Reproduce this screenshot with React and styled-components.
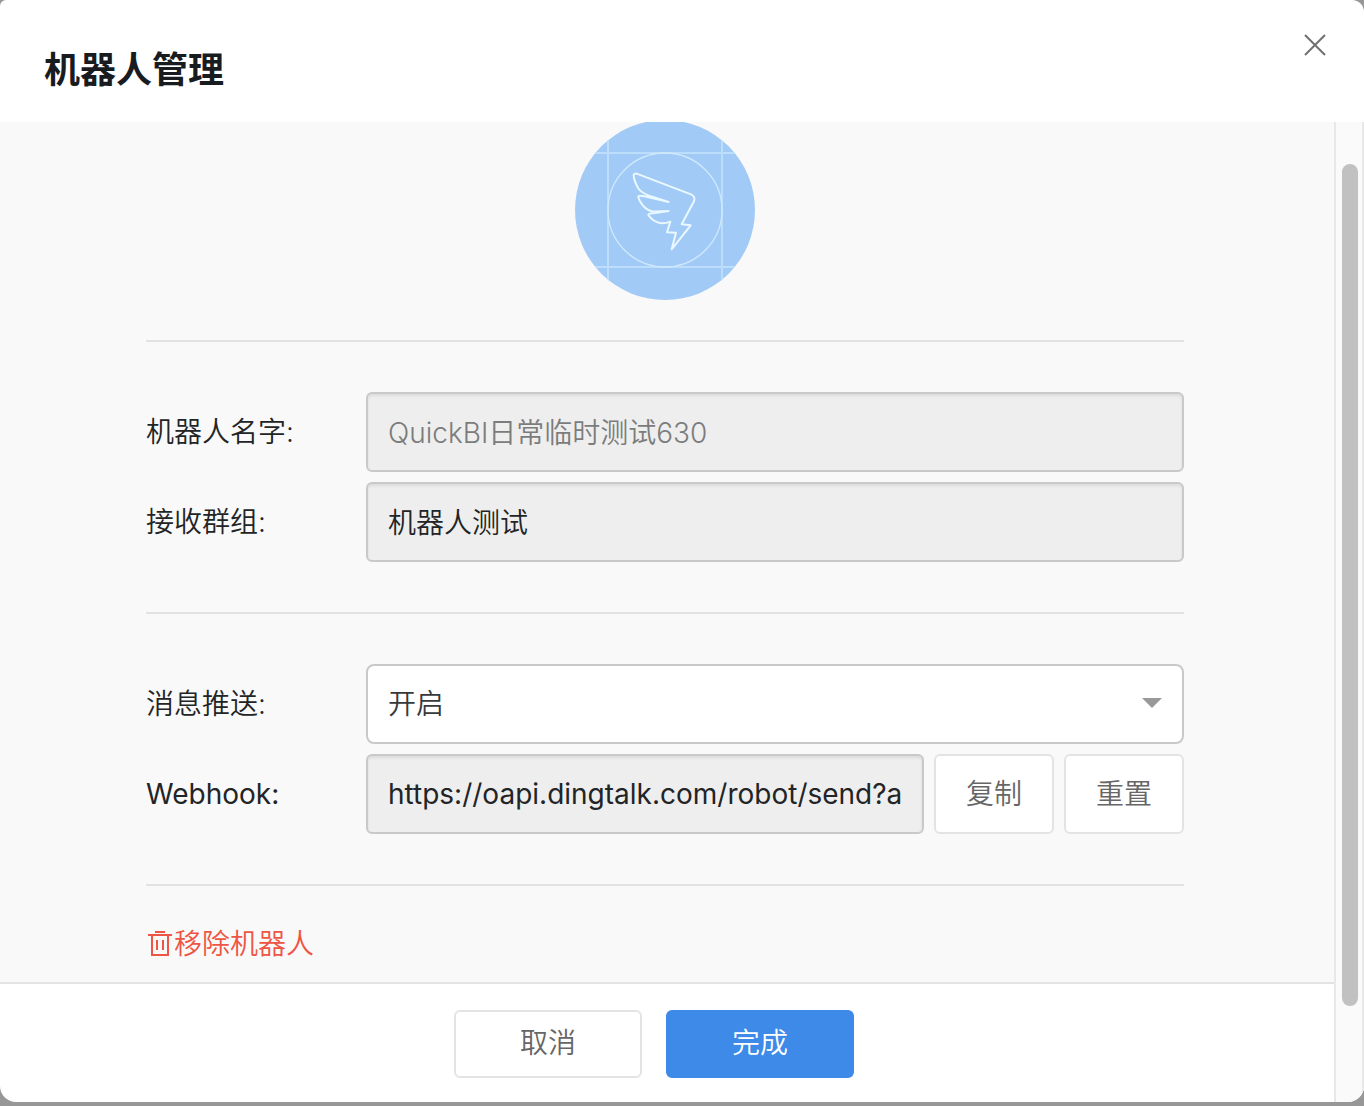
import React, { useState } from "react";
import styled, { createGlobalStyle } from "styled-components";

const GlobalStyle = createGlobalStyle`
  * {
    box-sizing: border-box;
  }
  body {
    margin: 0;
    background: #979797;
    color: #222426;
    font-family: Inter, "Noto Sans CJK SC", sans-serif;
    font-size: 28px;
    font-weight: 350;
    line-height: 40px;
  }
  button,
  input,
  select {
    font: inherit;
    color: inherit;
  }
`;

const Page = styled.div`
  display: flex;
  min-height: 100vh;
  padding-bottom: 4px;
`;

const Dialog = styled.section`
  display: flex;
  flex-direction: column;
  flex: 1;
  min-width: 0;
  overflow: hidden;
  background: #fff;
  border-radius: 6px 12px 16px 16px;
`;

const Header = styled.header`
  display: flex;
  justify-content: space-between;
  align-items: flex-start;
  height: 122px;
  padding: 24px 28px 0 44px;
`;

const Title = styled.h1`
  margin: 20px 0 0;
  font-size: 36px;
  line-height: 52px;
  font-weight: 700;
  color: #191c1f;
`;

const CloseButton = styled.button`
  display: flex;
  padding: 10px;
  border: 0;
  background: none;
  cursor: pointer;
`;

const Main = styled.div`
  display: flex;
  flex: 1;
`;

const Column = styled.div`
  display: flex;
  flex-direction: column;
  flex: 1;
  min-width: 0;
`;

const Body = styled.div`
  flex: 1;
  padding: 0 150px 18px 146px;
  background: #f9f9f9;
`;

const Avatar = styled.svg`
  display: block;
  width: 180px;
  height: 178px;
  margin: 0 auto 40px;
`;

const Group = styled.div`
  display: flex;
  flex-direction: column;
  gap: 10px;
  padding: 50px 0;
  border-top: 2px solid #e3e3e3;
`;

const Row = styled.div`
  display: flex;
  align-items: center;
  gap: 10px;
`;

const Label = styled.label`
  width: 210px;
  flex-shrink: 0;
  font-weight: ${(props) => (props.$latin ? 400 : 350)};
`;

const TextInput = styled.input`
  flex: 1;
  min-width: 0;
  height: 80px;
  padding: ${(props) => (props.$latin ? "0 20px" : "0 20px 2px")};
  border: 2px solid #c9c9c9;
  border-radius: 6px;
  outline: 0;
  background: #eee;
  box-shadow: inset 0 2px 3px rgba(0, 0, 0, 0.08);
  color: ${(props) => (props.$muted ? "#7c7c7c" : "#222426")};
  font-weight: ${(props) => (props.$latin ? 400 : 350)};
`;

const SelectWrap = styled.div`
  position: relative;
  flex: 1;

  svg {
    position: absolute;
    top: 34px;
    right: 22px;
    pointer-events: none;
  }
`;

const Select = styled.select`
  display: block;
  width: 100%;
  height: 80px;
  padding: 0 60px 0 20px;
  border: 2px solid #c9c9c9;
  border-radius: 8px;
  background: #fff;
  color: #38393b;
  appearance: none;
`;

const Button = styled.button`
  width: ${(props) => (props.$wide ? "188px" : "120px")};
  height: ${(props) => (props.$wide ? "68px" : "80px")};
  padding: ${(props) => (props.$wide ? "0 0 2px" : "0")};
  border: 2px solid ${(props) => (props.$primary ? "#3d8ae8" : "#e3e3e3")};
  border-radius: 6px;
  background: ${(props) => (props.$primary ? "#3d8ae8" : "#fff")};
  color: ${(props) => (props.$primary ? "#fff" : "#666")};
  cursor: pointer;
`;

const RemoveSection = styled.div`
  display: flex;
  padding-top: 38px;
  border-top: 2px solid #e3e3e3;
`;

const RemoveLink = styled.a`
  display: flex;
  align-items: center;
  color: #ee5544;
  text-decoration: none;
`;

const Footer = styled.footer`
  display: flex;
  justify-content: center;
  gap: 24px;
  padding: 26px 26px 24px 0;
  border-top: 2px solid #e3e3e3;
`;

const ScrollTrack = styled.div`
  display: flex;
  width: 30px;
  padding: 42px 4px 96px 6px;
  border: solid #e8e8e8;
  border-width: 0 2px;
  background: #fafafa;
`;

const ScrollThumb = styled.div`
  flex: 1;
  border-radius: 8px;
  background: #c1c1c1;
`;

function RobotAvatar() {
  return (
    <Avatar viewBox="30 30 540 534" fill="none" aria-hidden="true">
      <defs>
        <clipPath id="disc">
          <circle cx="300" cy="294" r="270" />
        </clipPath>
      </defs>
      <circle cx="300" cy="294" r="270" fill="#a1caf7" />
      <g clipPath="url(#disc)" stroke="#bcdefb" strokeWidth="6">
        <path d="M129 30V564M471 30V564M30 123H570M30 465H570" />
      </g>
      <circle cx="300" cy="294" r="171" stroke="#cfe9fc" strokeWidth="4" />
      <path
        d="M215 185L378 247Q392 253 387 268L350 337L377 340L320 412L333 362L306 361L316 329Q306 334 288 334Q263 329 250 309Q251 304 264 304L311 297Q280 299 261 298Q238 292 224 266Q219 255 220 253Q223 250 238 253L311 270L252 251Q224 239 218 226Q206 203 206 189Q208 183 215 185Z"
        stroke="#eaf8ff"
        strokeWidth="6"
        strokeLinejoin="round"
      />
    </Avatar>
  );
}

function TrashIcon() {
  return (
    <svg width="28" height="28" viewBox="0 0 28 28" fill="none" stroke="currentColor" strokeWidth="2" aria-hidden="true">
      <path d="M9 2H19M2 5H26M6 5V25H22V5M11 10V20M17 10V20" />
    </svg>
  );
}

function App() {
  const [push, setPush] = useState("on");

  return (
    <Page>
      <GlobalStyle />
      <Dialog role="dialog" aria-labelledby="title">
        <Header>
          <Title id="title">机器人管理</Title>
          <CloseButton type="button" aria-label="关闭">
            <svg width="22" height="22" viewBox="0 0 22 22" stroke="#707070" strokeWidth="2">
              <path d="M1 1L21 21M21 1L1 21" />
            </svg>
          </CloseButton>
        </Header>
        <Main>
          <Column>
            <Body>
              <RobotAvatar />
              <Group>
                <Row>
                  <Label htmlFor="name">机器人名字:</Label>
                  <TextInput id="name" $muted readOnly value="QuickBI日常临时测试630" />
                </Row>
                <Row>
                  <Label htmlFor="group">接收群组:</Label>
                  <TextInput id="group" readOnly value="机器人测试" />
                </Row>
              </Group>
              <Group>
                <Row>
                  <Label htmlFor="push">消息推送:</Label>
                  <SelectWrap>
                    <Select id="push" value={push} onChange={(e) => setPush(e.target.value)}>
                      <option value="on">开启</option>
                      <option value="off">关闭</option>
                    </Select>
                    <svg width="20" height="10" viewBox="0 0 20 10" fill="#999">
                      <path d="M0 0H20L10 10Z" />
                    </svg>
                  </SelectWrap>
                </Row>
                <Row>
                  <Label htmlFor="webhook" $latin>Webhook:</Label>
                  <TextInput
                    id="webhook"
                    $latin
                    readOnly
                    value="https://oapi.dingtalk.com/robot/send?access_token="
                  />
                  <Button type="button">复制</Button>
                  <Button type="button">重置</Button>
                </Row>
              </Group>
              <RemoveSection>
                <RemoveLink href="#remove">
                  <TrashIcon />
                  移除机器人
                </RemoveLink>
              </RemoveSection>
            </Body>
            <Footer>
              <Button type="button" $wide>取消</Button>
              <Button type="button" $wide $primary>完成</Button>
            </Footer>
          </Column>
          <ScrollTrack>
            <ScrollThumb />
          </ScrollTrack>
        </Main>
      </Dialog>
    </Page>
  );
}

export default App;
